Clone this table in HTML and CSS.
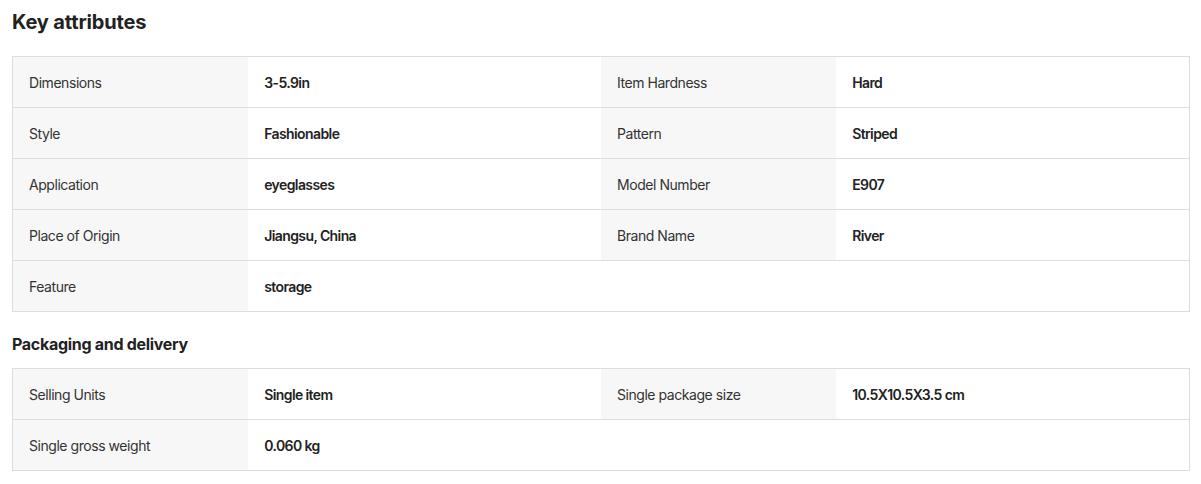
FILE: index.html
```html
<!DOCTYPE html>
<html lang="en">
<head>
    <meta charset="UTF-8">
    <title>Key attributes</title>
    <link rel="stylesheet" href="styles.css">
</head>
<body>
    <div class="attributes">
        <h2 class="title">Key attributes</h2>
        <div class="attr-table">
            <div class="attr-row">
                <div class="attr-name">Dimensions</div>
                <div class="attr-value">3-5.9in</div>
                <div class="attr-name">Item Hardness</div>
                <div class="attr-value">Hard</div>
            </div>
            <div class="attr-row">
                <div class="attr-name">Style</div>
                <div class="attr-value">Fashionable</div>
                <div class="attr-name">Pattern</div>
                <div class="attr-value">Striped</div>
            </div>
            <div class="attr-row">
                <div class="attr-name">Application</div>
                <div class="attr-value">eyeglasses</div>
                <div class="attr-name">Model Number</div>
                <div class="attr-value">E907</div>
            </div>
            <div class="attr-row">
                <div class="attr-name">Place of Origin</div>
                <div class="attr-value">Jiangsu, China</div>
                <div class="attr-name">Brand Name</div>
                <div class="attr-value">River</div>
            </div>
            <div class="attr-row">
                <div class="attr-name">Feature</div>
                <div class="attr-value">storage</div>
            </div>
        </div>

        <h3 class="subtitle">Packaging and delivery</h3>
        <div class="attr-table">
            <div class="attr-row">
                <div class="attr-name">Selling Units</div>
                <div class="attr-value">Single item</div>
                <div class="attr-name">Single package size</div>
                <div class="attr-value">10.5X10.5X3.5 cm</div>
            </div>
            <div class="attr-row">
                <div class="attr-name">Single gross weight</div>
                <div class="attr-value">0.060 kg</div>
            </div>
        </div>
    </div>
</body>
</html>
```

FILE: styles.css
```css
body {
    margin: 0;
    font-family: Inter, "Noto Sans", Arial, sans-serif;
    color: #222;
    background: #fff;
}

.attributes {
    padding: 0 11px 0 12px;
}

.title {
    font-size: 20px;
    font-weight: 700;
    line-height: 28px;
    letter-spacing: -0.15px;
    margin: 0;
    padding-top: 8px;
    margin-bottom: 20px;
}

.subtitle {
    font-size: 16px;
    font-weight: 700;
    line-height: 24px;
    letter-spacing: -0.3px;
    margin: 20px 0 12px;
}

.attr-table {
    border: 1px solid #ddd;
    border-bottom: none;
}

.attr-row {
    display: grid;
    grid-template-columns: 20% 30% 20% 30%;
    border-bottom: 1px solid #ddd;
}

.attr-name,
.attr-value {
    height: 50px;
    display: flex;
    align-items: center;
    padding: 0 16px;
    font-size: 14px;
}

.attr-name {
    background: #f7f7f7;
    color: #333;
    letter-spacing: -0.45px;
}

.attr-value {
    font-weight: 600;
    color: #222;
    letter-spacing: -0.6px;
}
```
